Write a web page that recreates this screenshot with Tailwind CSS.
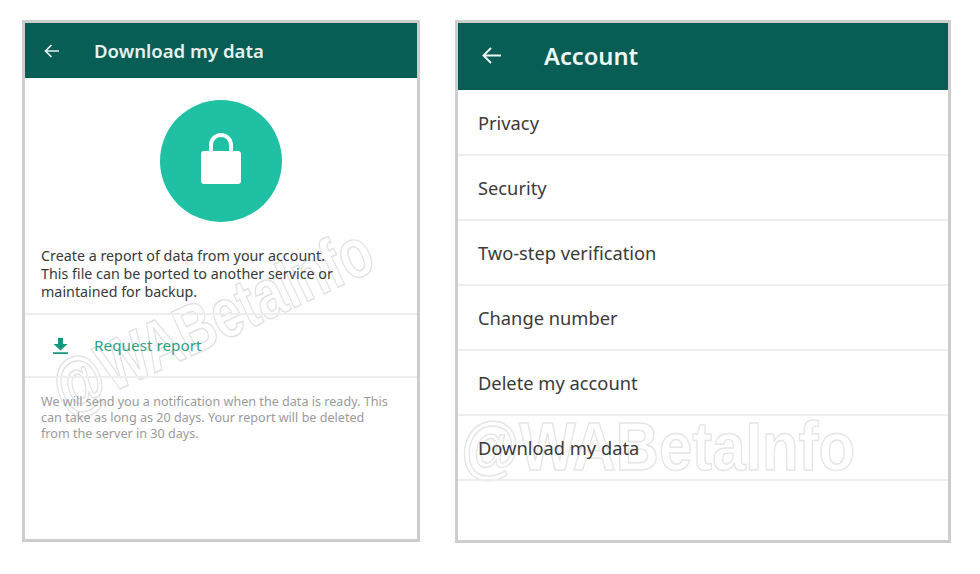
<!DOCTYPE html>
<html lang="en">

<head>
	<meta charset="UTF-8">
	<meta name="viewport" content="width=device-width, initial-scale=1.0">
	<title>Download my data</title>
	<script src="https://cdn.jsdelivr.net/npm/@tailwindcss/browser@4"></script>
</head>

<body class="bg-white h-[574px] w-[980px] overflow-hidden font-['Noto_Sans','Open_Sans',sans-serif]">
	<div class="flex gap-[35px] pl-[22px] pt-[20px]">

		<!-- left phone -->
		<div class="relative w-[398px] h-[522px] border-[3px] border-[#cdcdcd] bg-white overflow-hidden">
			<div class="h-[55px] bg-[#085d54] flex items-center text-[#e4f1ee]">
				<svg class="ml-[18px] w-[18px] h-[18px]" viewBox="0 0 18 18" fill="none" stroke="currentColor" stroke-width="1.7"><path d="M16 9H2.5M8.5 3 2.5 9l6 6" /></svg>
				<span class="ml-[33px] text-[18.6px] font-semibold mt-[1px]">Download my data</span>
			</div>
			<div class="flex justify-center pt-[22px]">
				<div class="w-[122px] h-[122px] rounded-full bg-[#1fc0a3] flex items-center justify-center">
					<svg class="w-[40px] h-[52px] mt-[-6px]" viewBox="0 0 40 52" fill="none">
						<path d="M10 24V13a10 10 0 0 1 20 0v11" stroke="#fff" stroke-width="4" />
						<rect y="19" width="40" height="33" rx="3" fill="#fff" />
					</svg>
				</div>
			</div>
			<!-- watermark sits under the texts -->
			<span class="absolute left-[30px] top-[335px] origin-[0%_50%] [transform:rotate(-25deg)_scaleX(0.75)] whitespace-nowrap font-['Liberation_Sans',sans-serif] font-bold text-[70px] leading-none text-transparent [-webkit-text-stroke:1.5px_#e2e2e2]">@WABetaInfo</span>
			<p class="relative mt-[25px] px-[16px] text-[14.3px] leading-[18px] text-[#383838]">Create a report of data from your account.<br>This file can be ported to another service or<br>maintained for backup.</p>
			<div class="relative mt-[12px] h-[65px] border-y-2 border-[#eeeeee] flex items-center">
				<svg class="ml-[28px] w-[15px] h-[16px]" viewBox="0 0 15 16" fill="#16977f"><path d="M5 0h5v6h4.5L7.5 12.5.5 6H5zM0 14.3h15V16H0z" /></svg>
				<span class="ml-[26px] text-[15.3px] text-[#2d9f88]">Request report</span>
			</div>
			<p class="relative mt-[16px] px-[16px] text-[12.6px] leading-[16px] text-[#9a9a9a]">We will send you a notification when the data is ready. This<br>can take as long as 20 days. Your report will be deleted<br>from the server in 30 days.</p>
		</div>

		<!-- right phone -->
		<div class="relative w-[496px] h-[523px] border-[3px] border-[#cdcdcd] bg-white overflow-hidden">
			<div class="h-[67px] bg-[#085d54] flex items-center text-[#eef6f4]">
				<svg class="ml-[23px] w-[21px] h-[21px] mt-[-2px]" viewBox="0 0 21 21" fill="none" stroke="currentColor" stroke-width="1.9"><path d="M20 10.5H2.5M10 3l-7.5 7.5L10 18" /></svg>
				<span class="ml-[42px] text-[23.7px] font-semibold mt-[1px]">Account</span>
			</div>
			<span class="absolute left-[3px] top-[389px] origin-left scale-x-[0.88] whitespace-nowrap font-['Liberation_Sans',sans-serif] font-bold text-[68px] leading-none text-transparent [-webkit-text-stroke:1.5px_#e6e6e6]">@WABetaInfo</span>
			<div class="relative mt-[1px] text-[18.3px] text-[#3a3a3a]">
				<div class="h-[65px] flex items-center pl-[20px] border-b-2 border-[#eeeeee]">Privacy</div>
				<div class="h-[65px] flex items-center pl-[20px] border-b-2 border-[#eeeeee]">Security</div>
				<div class="h-[65px] flex items-center pl-[20px] border-b-2 border-[#eeeeee]">Two-step verification</div>
				<div class="h-[65px] flex items-center pl-[20px] border-b-2 border-[#eeeeee]">Change number</div>
				<div class="h-[65px] flex items-center pl-[20px] border-b-2 border-[#eeeeee]">Delete my account</div>
				<div class="h-[65px] flex items-center pl-[20px] border-b-2 border-[#eeeeee]">Download my data</div>
			</div>
		</div>

	</div>
</body>

</html>
